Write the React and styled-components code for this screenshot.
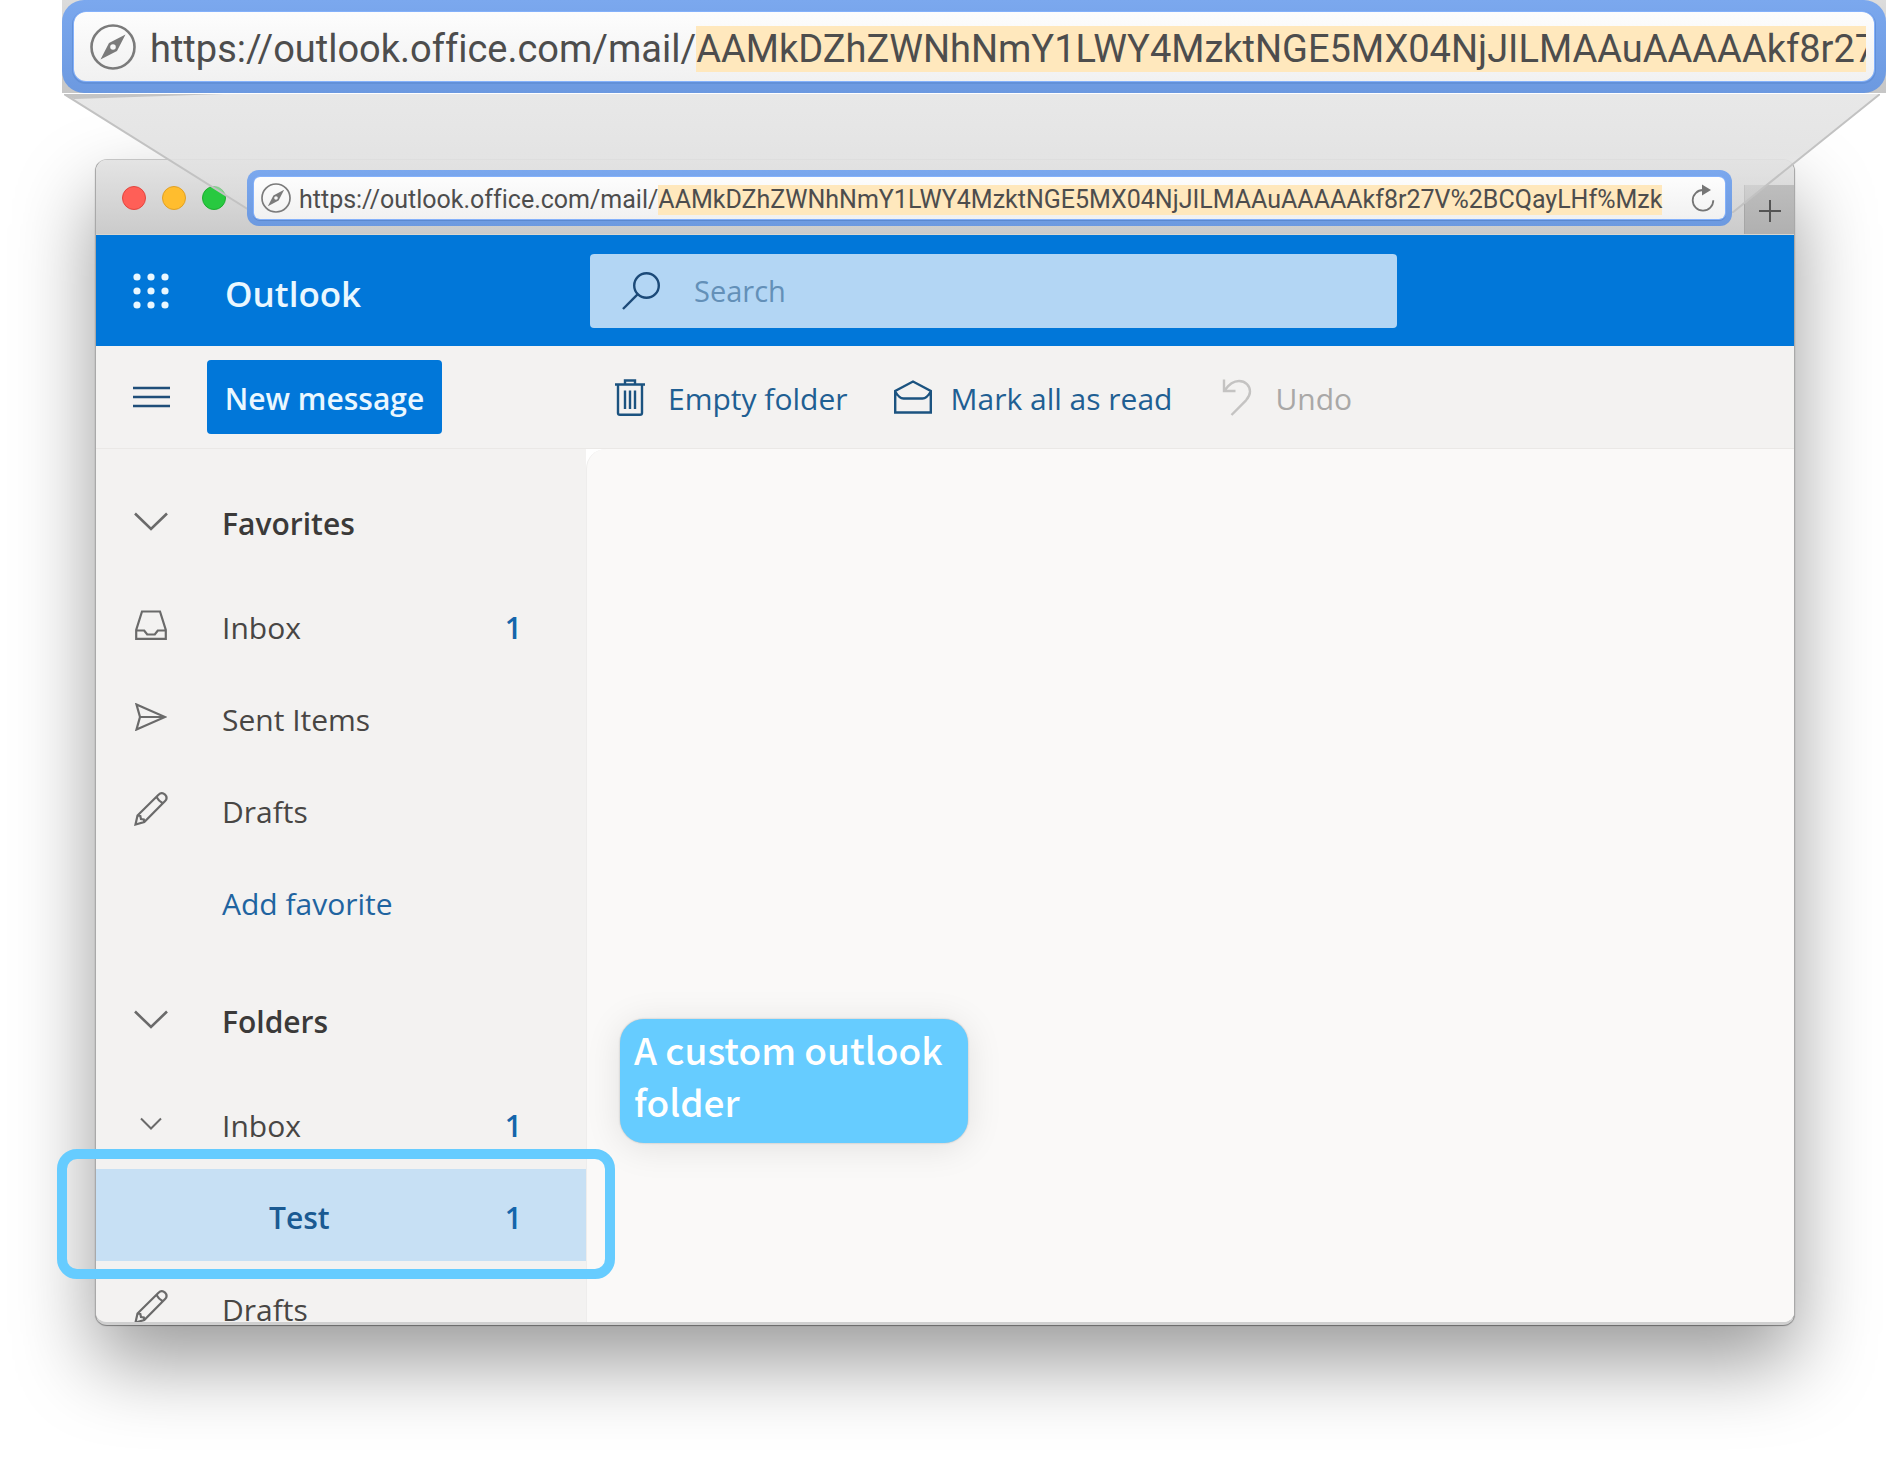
import React from "react";
import styled, { createGlobalStyle } from "styled-components";

const URL_HOST = "https://outlook.office.com/mail/";
const FOLDER_ID = "AAMkDZhZWNhNmY1LWY4MzktNGE5MX04NjJILMAAuAAAAAkf8r27V%2BCQayLHf%Mzk";

const CompassIcon = ({ size }) => (
  <svg width={size} height={size} viewBox="0 0 46 46" aria-hidden="true">
    <circle cx="23" cy="23" r="21.5" fill="none" stroke="#7b7b7b" strokeWidth="2.6" />
    <path
      fillRule="evenodd"
      fill="#7b7b7b"
      d="M35.5 10.5 27 27 10.5 35.5 19 19ZM23 20.2a2.8 2.8 0 1 0 0 5.6 2.8 2.8 0 0 0 0-5.6Z"
    />
  </svg>
);

const ReloadIcon = () => (
  <svg width="24" height="28" viewBox="0 0 24 28" aria-hidden="true">
    <path d="M12 6A10.3 10.3 0 1 0 22.3 16.3" fill="none" stroke="#757575" strokeWidth="1.8" />
    <path d="M11 0.5 20 6 11 11.5Z" fill="#757575" />
  </svg>
);

const AppsIcon = () => (
  <svg width="36" height="36" viewBox="0 0 36 36" fill="#e9f7ff" aria-hidden="true">
    {[4, 18, 32].map((y) => [4, 18, 32].map((x) => <circle key={`${x}-${y}`} cx={x} cy={y} r="3.6" />))}
  </svg>
);

const SearchIcon = () => (
  <svg width="38" height="38" viewBox="0 0 38 38" fill="none" stroke="#1c4a78" strokeWidth="2.4" aria-hidden="true">
    <circle cx="24.5" cy="13.5" r="12.3" />
    <path d="M15.8 22.2 1 37" />
  </svg>
);

const MenuIcon = () => (
  <svg width="37" height="22" viewBox="0 0 37 22" stroke="#1f4e79" strokeWidth="2.4" aria-hidden="true">
    <path d="M0 2h37M0 11h37M0 20h37" />
  </svg>
);

const TrashIcon = () => (
  <svg width="30" height="37" viewBox="0 0 30 37" fill="none" stroke="#1b5380" strokeWidth="2.4" aria-hidden="true">
    <path d="M0 5.5h30M10 5.5V1.5h10v4M3 5.5V34q0 1.8 2 1.8h20q2 0 2-1.8V5.5M10 11.5V30M15 11.5V30M20 11.5V30" />
  </svg>
);

const EnvelopeIcon = () => (
  <svg width="38" height="34" viewBox="0 0 38 34" fill="none" stroke="#1b5380" strokeWidth="2.4" aria-hidden="true">
    <path d="M1.2 11v21.5h35.6V11L19 1.5ZM1.2 11.5q4 7 8.3 7h19q4.300 0 8.3-7" />
  </svg>
);

const UndoIcon = () => (
  <svg width="30" height="37" viewBox="0 0 30 37" fill="none" stroke="#c4c3c2" strokeWidth="2.4" aria-hidden="true">
    <path d="M2 0.5V12h11.5M2.5 11.5C7 5 11 2 17 2c6.5 0 11 4.8 11 10.6 0 3.6-1.5 6-4 8.7L9.5 36" />
  </svg>
);

const ChevronIcon = ({ small }) => (
  <svg
    width={small ? 22 : 34}
    height={small ? 13 : 19}
    viewBox={small ? "0 0 22 13" : "0 0 34 19"}
    fill="none"
    stroke="#6a6a6a"
    strokeWidth={small ? 2 : 2.6}
    aria-hidden="true"
  >
    <path d={small ? "M1 1.5 11 11.5 21 1.5" : "M1 1.5 17 17 33 1.5"} />
  </svg>
);

const InboxIcon = () => (
  <svg width="32" height="30" viewBox="0 0 32 30" fill="none" stroke="#6a6a6a" strokeWidth="2.2" aria-hidden="true">
    <path d="M7 1.5h18L30.8 20v8.8H1.2V20ZM1.2 20.5h8l3 4h7.6l3-4h8" />
  </svg>
);

const SendIcon = () => (
  <svg width="32" height="28" viewBox="0 0 32 28" fill="none" stroke="#6a6a6a" strokeWidth="2.2" aria-hidden="true">
    <path d="M1.5 1.5 30 14 1.5 26.5 5 14ZM5 14h25" />
  </svg>
);

const PencilIcon = () => (
  <svg width="34" height="34" viewBox="0 0 34 34" fill="none" stroke="#6a6a6a" strokeWidth="2.2" aria-hidden="true">
    <path d="M1.5 32.5 3.5 23.5 24.5 2.8c2-2 4.5-2 6.5-.2 1.9 2 2 4.4.1 6.4L10.3 30ZM3.5 23.5l2.8.5.7 3 2.8.5.5 2.5M22.5 5c1.5 2.8 3.5 4.8 6.3 6.3" />
  </svg>
);

const favorites = [
  { label: "Inbox", icon: <InboxIcon />, count: 1 },
  { label: "Sent Items", icon: <SendIcon /> },
  { label: "Drafts", icon: <PencilIcon /> },
];

const folders = [
  { label: "Inbox", icon: <ChevronIcon small />, count: 1 },
  { label: "Test", count: 1, selected: true },
  { label: "Drafts", icon: <PencilIcon /> },
];

const FolderRow = ({ label, icon, count, selected }) => (
  <Row $selected={selected} href="#folder">
    <RowIcon>{icon}</RowIcon>
    <RowLabel $nested={selected}>{label}</RowLabel>
    {count && <Count>{count}</Count>}
  </Row>
);

const App = () => (
  <Page>
    <GlobalStyle />

    <Magnified>
      <MagnifiedRing>
        <MagnifiedField>
          <CompassIcon size={46} />
          <MagnifiedUrl>
            {URL_HOST}
            <Mark>{FOLDER_ID}</Mark>
          </MagnifiedUrl>
        </MagnifiedField>
      </MagnifiedRing>
    </Magnified>

    {/* The beam that joins the magnified address to the real one */}
    <Beam viewBox="0 0 1816 119" preserveAspectRatio="none" aria-hidden="true">
      <defs>
        <linearGradient id="beam" x1="0" y1="0" x2="0" y2="1">
          <stop offset="0" stopColor="#e8e8e8" />
          <stop offset="0.5" stopColor="#e3e3e3" stopOpacity="0.95" />
          <stop offset="0.7" stopColor="#e0e0e0" stopOpacity="0.6" />
          <stop offset="1" stopColor="#dcdcdc" stopOpacity="0.4" />
        </linearGradient>
      </defs>
      <path d="M0 0H1816L1668 119H190Z" fill="url(#beam)" />
      <path d="M0 0H160L10 5Z" fill="#a0a0a0" opacity="0.5" />
      <path d="M0 0 190 119M1816 0 1668 119" stroke="#c2c2c2" strokeWidth="2" />
    </Beam>

    <Stage>
      <Window>
        <TitleBar>
          <Lights>
            <Light $color="#ff5f57" $edge="#e2463f" aria-label="Close" />
            <Light $color="#ffbd2e" $edge="#e0a025" aria-label="Minimize" />
            <Light $color="#28c940" $edge="#1dad2f" aria-label="Zoom" />
          </Lights>
          <AddressRing>
            <AddressField>
              <CompassIcon size={30} />
              <AddressUrl>
                {URL_HOST}
                <Mark>{FOLDER_ID}</Mark>
              </AddressUrl>
              <ReloadButton aria-label="Reload">
                <ReloadIcon />
              </ReloadButton>
            </AddressField>
          </AddressRing>
          <NewTab aria-label="New tab">
            <svg width="22" height="22" viewBox="0 0 22 22" stroke="#555" strokeWidth="2" aria-hidden="true">
              <path d="M11 0v22M0 11h22" />
            </svg>
          </NewTab>
        </TitleBar>

        <Header>
          <HeaderLeft>
            <IconSlot>
              <AppsIcon />
            </IconSlot>
            <Brand>Outlook</Brand>
          </HeaderLeft>
          <SearchBox>
            <SearchIcon />
            <SearchInput type="text" placeholder="Search" aria-label="Search" />
          </SearchBox>
        </Header>

        <Toolbar>
          <ToolbarLeft>
            <IconSlot>
              <MenuIcon />
            </IconSlot>
            <NewMessage>New message</NewMessage>
          </ToolbarLeft>
          <Commands>
            <Command>
              <CommandIcon><TrashIcon /></CommandIcon>
              <CommandLabel>Empty folder</CommandLabel>
            </Command>
            <Command>
              <CommandIcon><EnvelopeIcon /></CommandIcon>
              <CommandLabel>Mark all as read</CommandLabel>
            </Command>
            <Command disabled>
              <CommandIcon><UndoIcon /></CommandIcon>
              <CommandLabel>Undo</CommandLabel>
            </Command>
          </Commands>
        </Toolbar>

        <Body>
          <Sidebar>
            <Group>
              <GroupHeader>
                <RowIcon><ChevronIcon /></RowIcon>
                <RowLabel>Favorites</RowLabel>
              </GroupHeader>
              {favorites.map((item) => (
                <FolderRow key={item.label} {...item} />
              ))}
              <Row $link href="#add">
                <RowIcon />
                <RowLabel>Add favorite</RowLabel>
              </Row>
            </Group>
            <Group>
              <GroupHeader>
                <RowIcon><ChevronIcon /></RowIcon>
                <RowLabel>Folders</RowLabel>
              </GroupHeader>
              {folders.map((item) => (
                <FolderRow key={item.label} {...item} />
              ))}
            </Group>
          </Sidebar>
          <Pane>
            <PaneInner />
          </Pane>
        </Body>
      </Window>
      <Highlight />
      <Callout>A custom outlook folder</Callout>
    </Stage>
  </Page>
);

export default App;

const GlobalStyle = createGlobalStyle`
  * {
    box-sizing: border-box;
  }

  body {
    margin: 0;
    background: #fff;
    overflow: hidden;
  }

  button {
    border: none;
    padding: 0;
    background: none;
    font: inherit;
  }
`;

const Page = styled.div`
  position: relative;
  display: flex;
  flex-direction: column;
  height: 100vh;
  font-family: "Open Sans", "Noto Sans", sans-serif;
`;

// Magnified copy of the address bar
const Magnified = styled.div`
  position: relative;
  z-index: 2;
  flex: none;
  height: 93px;
  margin: 0 4px 0 62px;
  background: linear-gradient(#dcdcdc, #c6c6c6);
`;

const MagnifiedRing = styled.div`
  height: 100%;
  padding: 12px;
  border-radius: 22px;
  background: linear-gradient(#7ba8ee, #6c99e0);
`;

const MagnifiedField = styled.div`
  display: flex;
  align-items: center;
  gap: 14px;
  height: 100%;
  padding: 0 8px 0 16px;
  border-radius: 12px;
  background: linear-gradient(#fdfdfd, #f1f1f1);
  box-shadow: 0 0 0 1px #84b1fb, 0 1px 0 2px #6290d8;
`;

const MagnifiedUrl = styled.div`
  flex: 1;
  min-width: 0;
  padding-top: 4px;
  overflow: hidden;
  white-space: nowrap;
  font: 38px/46px Roboto, Inter, sans-serif;
  font-variant-ligatures: none;
  color: #4d4d4d;
`;

const Mark = styled.mark`
  display: inline-block;
  color: inherit;
  background: #ffe8bd;
`;

const Beam = styled.svg`
  position: absolute;
  z-index: 1;
  top: 94px;
  left: 64px;
  width: calc(100% - 74px);
  height: 119px;
`;

// Browser window
const Stage = styled.div`
  position: relative;
  flex: 1;
  min-height: 0;
  display: flex;
  margin: 66px 95px 133px;
`;

const Window = styled.div`
  flex: 1;
  min-width: 0;
  display: flex;
  flex-direction: column;
  overflow: hidden;
  border: 1px solid #a9a9a9;
  border-top-color: #c4c4c4;
  border-bottom: 3px solid #cfcfcf;
  border-radius: 12px;
  background: #f3f2f1;
  box-shadow: 0 1px 1px rgba(0, 0, 0, 0.4), 0 37px 80px rgba(0, 0, 0, 0.4);
`;

const TitleBar = styled.div`
  display: flex;
  align-items: center;
  flex: none;
  height: 75px;
  padding: 2px 0 0 26px;
  border-bottom: 1px solid #d9d6cf;
  background: linear-gradient(#e4e4e4, #cbcbcb);
`;

const Lights = styled.div`
  display: flex;
  gap: 16px;
  margin-right: 21px;
`;

const Light = styled.button`
  width: 24px;
  height: 24px;
  border-radius: 50%;
  border: 1px solid ${({ $edge }) => $edge};
  background: ${({ $color }) => $color};
`;

const AddressRing = styled.div`
  position: relative;
  z-index: 2;
  flex: 1;
  min-width: 0;
  height: 56px;
  padding: 7px;
  border-radius: 12px;
  background: linear-gradient(#7ba8ee, #6c99e0);
`;

const AddressField = styled.div`
  display: flex;
  align-items: center;
  gap: 8px;
  height: 100%;
  padding: 0 10px 0 7px;
  border-radius: 6px;
  background: linear-gradient(#fdfdfd, #f1f1f1);
  box-shadow: 0 0 0 1px #84b1fb, 0 1px 0 1px #5b88d0;
`;

const AddressUrl = styled.div`
  flex: 1;
  min-width: 0;
  padding-top: 4px;
  overflow: hidden;
  white-space: nowrap;
  font: 25px/30px Roboto, Inter, sans-serif;
  font-variant-ligatures: none;
  color: #4d4d4d;
`;

const ReloadButton = styled.button`
  display: flex;
`;

const NewTab = styled.button`
  align-self: flex-end;
  display: flex;
  align-items: center;
  justify-content: center;
  width: 50px;
  height: 49px;
  margin-left: 12px;
  padding-top: 2px;
  border-left: 1px solid #a6a6a6;
  background: linear-gradient(#bdbdbd, #b0b0b0);
`;

// Outlook header
const Header = styled.header`
  display: flex;
  align-items: center;
  flex: none;
  height: 111px;
  background: #0177d9;
`;

const HeaderLeft = styled.div`
  display: flex;
  align-items: center;
  flex: none;
  width: 494px;
  padding-left: 36px;
`;

const IconSlot = styled.div`
  display: flex;
  align-items: center;
  justify-content: center;
  width: 38px;
`;

const Brand = styled.div`
  padding: 6px 0 0 55px;
  font-size: 35px;
  line-height: 44px;
  font-weight: 600;
  color: #eaf7ff;
`;

const SearchBox = styled.label`
  display: flex;
  align-items: center;
  flex: 0 1 807px;
  gap: 32px;
  height: 74px;
  padding-left: 32px;
  border-radius: 4px;
  background: #b3d6f4;
`;

const SearchInput = styled.input`
  flex: 1;
  min-width: 0;
  border: none;
  outline: none;
  background: none;
  font: 29px/40px "Open Sans", "Noto Sans", sans-serif;

  &::placeholder {
    color: #6390b8;
    opacity: 1;
  }
`;

// Command bar
const Toolbar = styled.div`
  display: flex;
  align-items: center;
  flex: none;
  height: 103px;
  border-bottom: 1px solid #eae8e6;
  background: #f3f2f1;
`;

const ToolbarLeft = styled.div`
  display: flex;
  align-items: center;
  flex: none;
  width: 494px;
  padding-left: 36px;
`;

const NewMessage = styled.button`
  width: 235px;
  height: 74px;
  margin-left: 37px;
  padding-top: 4px;
  border-radius: 4px;
  background: #0177d9;
  font-size: 30px;
  line-height: 40px;
  font-weight: 600;
  color: #eaf7ff;
`;

const Commands = styled.div`
  display: flex;
  gap: 46px;
  padding-left: 21px;
`;

const Command = styled.button`
  display: flex;
  align-items: center;
  gap: 19px;
  font-size: 30px;
  line-height: 40px;
  white-space: nowrap;
  color: #1f5f93;

  &:disabled {
    color: #a9a8a7;
  }
`;

const CommandIcon = styled.span`
  display: flex;
  justify-content: center;
  width: 38px;
`;

const CommandLabel = styled.span`
  padding-top: 4px;
`;

const Body = styled.div`
  display: flex;
  flex: 1;
  min-height: 0;
`;

// Folder list
const Sidebar = styled.nav`
  flex: none;
  width: 490px;
  overflow: hidden;
  background: #f3f2f1;
`;

const Group = styled.div`
  padding-top: 26px;
`;

const GroupHeader = styled.div`
  display: flex;
  align-items: center;
  height: 92px;
  margin-bottom: 12px;
  padding-left: 36px;
  font-size: 30px;
  line-height: 40px;
  font-weight: 600;
  color: #3b3a39;
`;

const Row = styled.a`
  display: flex;
  align-items: center;
  height: 92px;
  padding: 0 64px 0 36px;
  font-size: 30px;
  line-height: 40px;
  text-decoration: none;
  font-weight: ${({ $selected }) => ($selected ? 600 : 400)};
  color: ${({ $selected, $link }) => ($selected ? "#1a5a92" : $link ? "#1f64a0" : "#484644")};
  background: ${({ $selected }) => ($selected ? "#c7e0f4" : "none")};
`;

const RowIcon = styled.span`
  display: flex;
  justify-content: center;
  width: 38px;
`;

const RowLabel = styled.span`
  flex: 1;
  padding: 6px 0 0 ${({ $nested }) => ($nested ? 99 : 52)}px;
`;

const Count = styled.span`
  padding-top: 6px;
  font-weight: 600;
  color: #1465ab;
`;

const Pane = styled.main`
  flex: 1;
  background: #fff;
`;

const PaneInner = styled.div`
  height: 100%;
  border-left: 1px solid #eeedec;
  border-radius: 20px 0 0 0;
  background: #faf9f8;
`;

// Annotations over the window
const Highlight = styled.div`
  position: absolute;
  left: -38px;
  bottom: 46px;
  width: 558px;
  height: 130px;
  border: 10px solid #66ccff;
  border-radius: 20px;
`;

const Callout = styled.div`
  position: absolute;
  left: 525px;
  bottom: 182px;
  width: 348px;
  padding: 4px 14px 16px;
  border-radius: 24px;
  background: #66ccff;
  box-shadow: 0 0 2px rgba(0, 0, 0, 0.25), 0 4px 36px rgba(0, 0, 0, 0.1);
  font: 500 37px/52px "Noto Sans CJK SC", sans-serif;
  color: #fff;
`;
